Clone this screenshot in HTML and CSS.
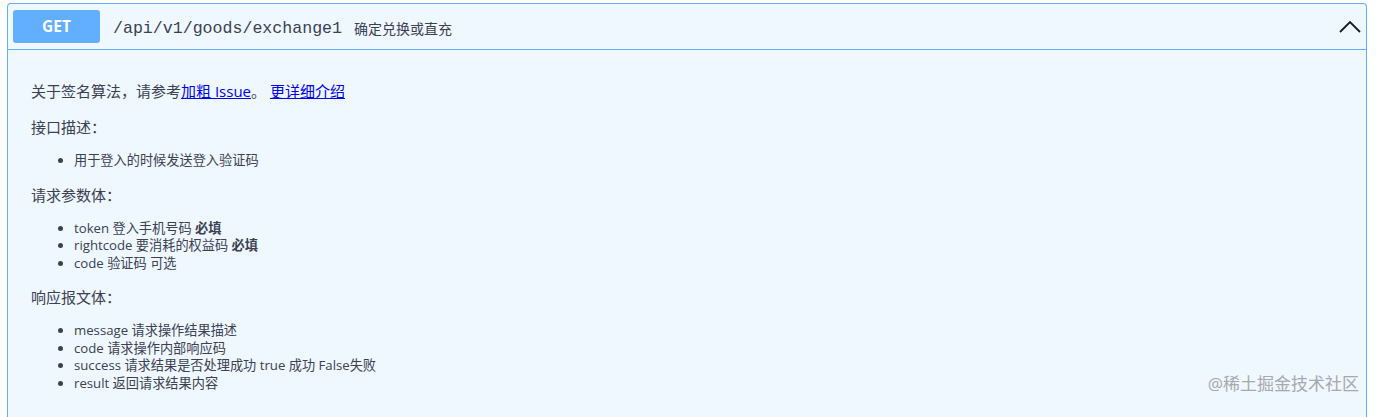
FILE: index.html
```html
<!DOCTYPE html>
<html lang="zh-CN">
<head>
    <meta charset="UTF-8">
    <meta name="viewport" content="width=device-width, initial-scale=1.0">
    <title>/api/v1/goods/exchange1</title>
    <link rel="stylesheet" href="styles.css">
</head>
<body>

    <div class="opblock">
        <div class="opblock-summary">
            <span class="method">GET</span>
            <span class="path">/api/v1/goods/exchange1</span>
            <span class="summary-desc">确定兑换或直充</span>
            <svg class="arrow" width="24" height="24" viewBox="0 0 24 24">
                <path d="M2 17 L12 7 L22 17" fill="none" stroke="#1b1b1b" stroke-width="1.8"/>
            </svg>
        </div>

        <div class="opblock-body">
            <p>关于签名算法，请参考<a href="#">加粗 Issue</a>。 <a href="#">更详细介绍</a></p>
            <p>接口描述：</p>
            <ul>
                <li>用于登入的时候发送登入验证码</li>
            </ul>
            <p>请求参数体：</p>
            <ul>
                <li>token 登入手机号码 <strong>必填</strong></li>
                <li>rightcode 要消耗的权益码 <strong>必填</strong></li>
                <li>code 验证码 可选</li>
            </ul>
            <p>响应报文体：</p>
            <ul>
                <li>message 请求操作结果描述</li>
                <li>code 请求操作内部响应码</li>
                <li>success 请求结果是否处理成功 true 成功 False失败</li>
                <li>result 返回请求结果内容</li>
            </ul>
            <div class="watermark">@稀土掘金技术社区</div>
        </div>
    </div>

</body>
</html>
```

FILE: styles.css
```css
body {
    margin: 0;
    padding: 3px 10px 0 7px;
    background: white;
    font-family: "Open Sans", "Noto Sans CJK SC", sans-serif;
    color: #3b4151;
}
.opblock {
    border: 1px solid #61affe;
    border-bottom: none;
    border-radius: 4px 4px 0 0;
    background: #eff7ff;
    height: 420px;
    overflow: hidden;
}
.opblock-summary {
    display: flex;
    align-items: center;
    height: 45px;
    padding: 0 5px;
    border-bottom: 1px solid #61affe;
}
.method {
    width: 87px;
    height: 33px;
    line-height: 33px;
    text-align: center;
    background: #61affe;
    color: white;
    font-size: 15.5px;
    font-weight: bold;
    border-radius: 3px;
}
.path {
    margin-left: 13px;
    padding-top: 3px;
    font-family: "Liberation Mono", monospace;
    font-size: 16.6px;
    color: #3b4151;
}
.summary-desc {
    margin-left: 12px;
    padding-top: 2px;
    font-size: 14px;
    color: #3b4151;
}
.arrow {
    margin-left: auto;
    margin-right: -1px;
}
.opblock-body {
    position: relative;
    padding: 31px 23px 0;
}
.opblock-body p {
    font-size: 15px;
    line-height: 20px;
    margin: 0 0 15px;
}
.opblock-body p + p {
    margin-top: 16px;
}
.opblock-body ul + p {
    margin-top: 15px;
}
.opblock-body a {
    color: #0000ee;
}
.opblock-body ul {
    margin: 0;
    padding-left: 43px;
    font-size: 13.2px;
    line-height: 17.5px;
}
.watermark {
    position: absolute;
    right: 7px;
    top: 320px;
    font-size: 17px;
    color: #a6a9ad;
}
```
